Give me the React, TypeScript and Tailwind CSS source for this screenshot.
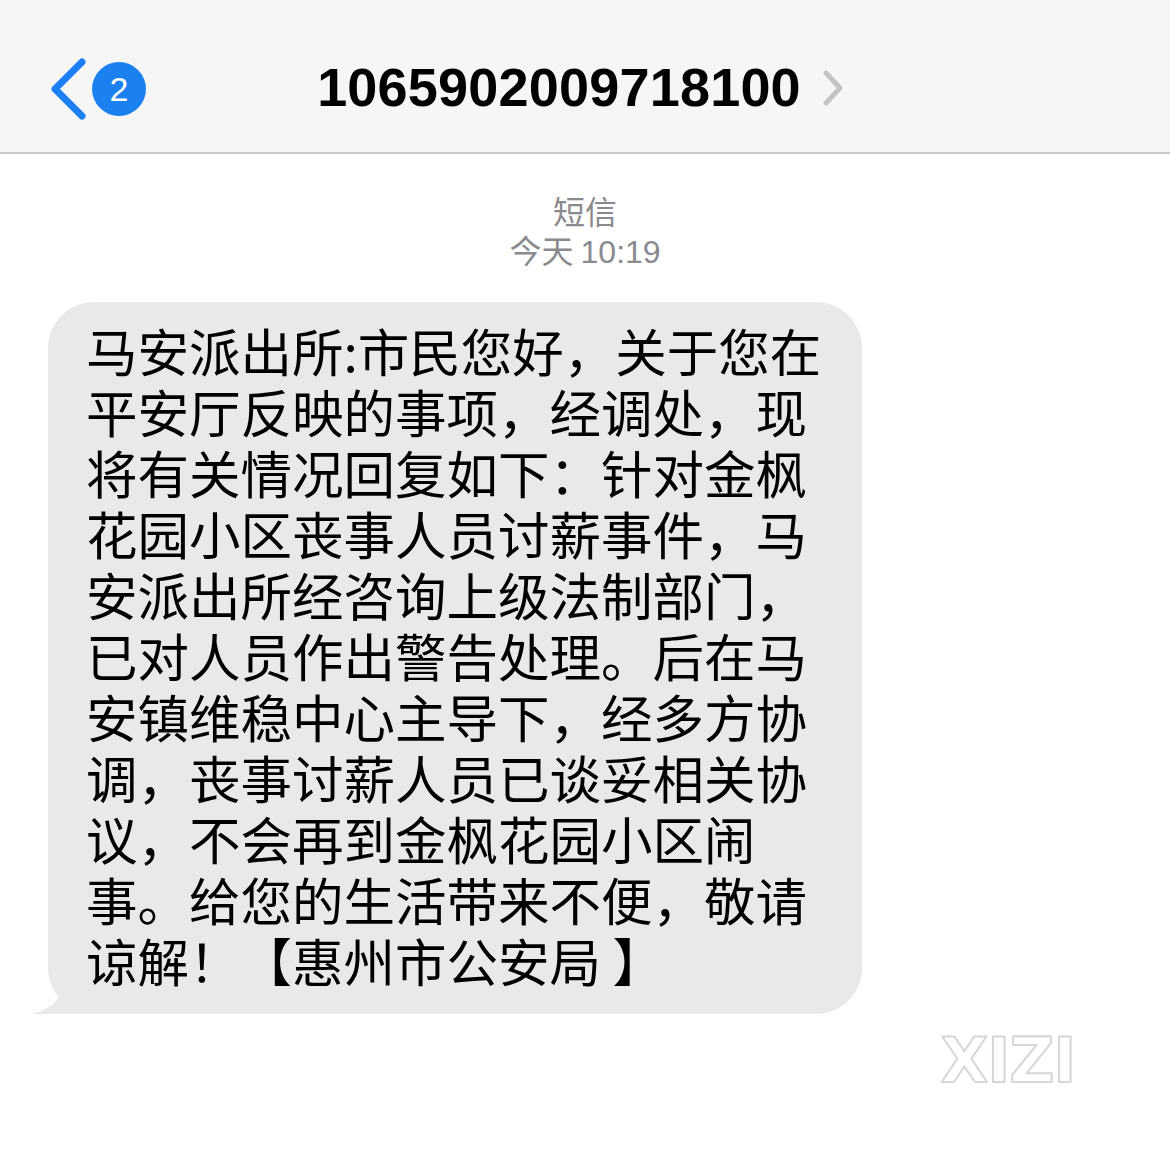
const lines = [
  "马安派出所:市民您好，关于您在",
  "平安厅反映的事项，经调处，现",
  "将有关情况回复如下：针对金枫",
  "花园小区丧事人员讨薪事件，马",
  "安派出所经咨询上级法制部门，",
  "已对人员作出警告处理。后在马",
  "安镇维稳中心主导下，经多方协",
  "调，丧事讨薪人员已谈妥相关协",
  "议，不会再到金枫花园小区闹",
  "事。给您的生活带来不便，敬请",
  "谅解！【惠州市公安局 】",
];

function Header() {
  return (
    <header className="h-[154px] bg-[#f6f6f6] border-b-2 border-[#c9c9cc] flex items-center pt-[22px] relative">
      <div className="absolute left-[48px] top-[58px] flex items-center">
        <svg width="40" height="62" viewBox="0 0 40 62" fill="none">
          <path
            d="M34 4 L7 31 L34 58"
            stroke="#1c7ff2"
            strokeWidth="7"
            strokeLinecap="round"
            strokeLinejoin="round"
          />
        </svg>
        <div className="ml-[4px] size-[54px] rounded-full bg-[#1b80f0] flex items-center justify-center text-white text-[34px] font-['Liberation_Sans',sans-serif]">
          2
        </div>
      </div>
      <div className="flex-1 flex items-center justify-center pr-[8px]">
        <span className="text-[54px] font-bold text-black tracking-[0.2px] font-['Liberation_Sans',sans-serif]">
          1065902009718100
        </span>
        <svg width="24" height="38" viewBox="0 0 24 38" fill="none" className="ml-[20px] mt-[2px]">
          <path
            d="M5 4 L19 19 L5 34"
            stroke="#c4c4c7"
            strokeWidth="5"
            strokeLinecap="round"
            strokeLinejoin="round"
          />
        </svg>
      </div>
    </header>
  );
}

export default function App() {
  return (
    <main className="w-[1170px] h-[1166px] bg-white overflow-hidden font-['Noto_Sans_CJK_SC',sans-serif]">
      <Header />
      <div className="flex flex-col items-center pt-[37px] text-[#8a8a8e] leading-[39px]">
        <span className="text-[32px]">短信</span>
        <span className="text-[32px]">
          今天 <span className="font-['Liberation_Sans',sans-serif]">10:19</span>
        </span>
      </div>
      <div className="relative ml-[48px] mt-[30px] w-[814px]">
        <div className="bg-[#e9e9eb] rounded-[46px] pl-[38px] pr-[30px] pt-[17px] pb-[24px] relative z-10">
          {lines.map((line) => (
            <p
              key={line}
              className="text-[51.5px] leading-[61px] text-black whitespace-nowrap"
            >
              {line}
            </p>
          ))}
        </div>
        <svg
          className="absolute left-[-16px] bottom-0"
          width="60"
          height="34"
          viewBox="0 0 60 34"
        >
          <path d="M30 0 C30 18 22 28 0 34 L60 34 L60 0 Z" fill="#e9e9eb" />
        </svg>
      </div>
      <div className="flex justify-end pr-[72px] mt-[12px]">
        <svg width="180" height="64" viewBox="0 0 180 64">
          <text
            x="90"
            y="56"
            textAnchor="middle"
            fontFamily="DejaVu Sans, sans-serif"
            fontWeight="700"
            fontSize="62"
            fill="#ffffff"
            stroke="#d6d6d6"
            strokeWidth="2"
            strokeLinejoin="round"
            letterSpacing="-1"
          >
            XIZI
          </text>
        </svg>
      </div>
    </main>
  );
}
